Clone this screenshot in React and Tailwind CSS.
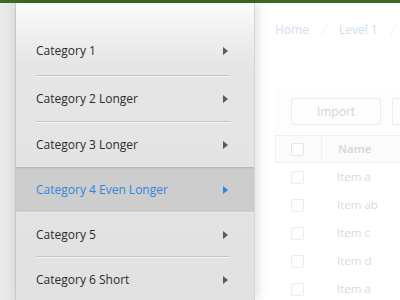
import { useState } from "react";

const categories = [
  "Category 1",
  "Category 2 Longer",
  "Category 3 Longer",
  "Category 4 Even Longer",
  "Category 5",
  "Category 6 Short",
];

const rows = ["Item a", "Item ab", "Item c", "Item d", "Item a"];

function Arrow({ active }) {
  return (
    <svg width="5" height="8" viewBox="0 0 5 8" className="shrink-0">
      <path d="M0 0 L5 4 L0 8 Z" fill={active ? "#2f86df" : "#5a5a5a"} />
    </svg>
  );
}

function Separator() {
  return (
    <div className="ml-5 mr-6 flex flex-col">
      <div className="h-px bg-[#c4c4c4]" />
      <div className="h-px bg-[#f6f6f6]" />
    </div>
  );
}

export default function App() {
  const [active, setActive] = useState(3);

  return (
    <div className="w-[400px] h-[300px] overflow-hidden flex flex-col bg-white font-['Open_Sans',sans-serif]">
      {/* top bar */}
      <div className="h-[3px] bg-[#3b6b20] shrink-0" />

      <div className="flex flex-1 min-h-0">
        {/* left strip */}
        <div className="w-4 shrink-0 bg-[linear-gradient(to_right,#ececec,#e2e2e2)] border-r border-[#cdcdcd]" />

        {/* menu panel */}
        <div className="w-[239px] shrink-0 relative z-10 pt-[24px] border-r border-[#d6d6d6] bg-[linear-gradient(to_bottom,#fbfbfb_0px,#e6e6e6_60px,#e1e1e1_100%)] shadow-[3px_0_10px_rgba(0,0,0,0.12)]">
          {categories.map((c, i) => {
            const isActive = i === active;
            const showSep =
              i < categories.length - 1 && i !== active && i + 1 !== active;
            return (
              <div key={c}>
                <button
                  onClick={() => setActive(i)}
                  className={`w-full flex items-center justify-between pl-5 pr-[26px] text-left text-[12px] ${
                    isActive
                      ? "h-[46px] bg-[#cdcdcd] border-t border-[#b9b9b9] border-b border-b-[#ececec] text-[#2f86df] shadow-[inset_0_1px_2px_rgba(0,0,0,0.06)]"
                      : i === 0
                      ? "h-[48px] text-[#2b2b2b]"
                      : i === 4
                      ? "h-[43px] text-[#2b2b2b]"
                      : "h-[44px] text-[#2b2b2b]"
                  }`}
                >
                  <span>{c}</span>
                  <Arrow active={isActive} />
                </button>
                {showSep && <Separator />}
              </div>
            );
          })}
        </div>

        {/* faded content */}
        <div className="flex-1 min-w-0 pl-5">
          {/* breadcrumb */}
          <div className="h-[47px] mt-[3px] flex items-center gap-3 text-[12px] text-[#d2def0]">
            <span>Home</span>
            <svg width="6" height="12" viewBox="0 0 6 12">
              <path d="M0 12 L6 0" stroke="#f0f3f8" strokeWidth="1" fill="none" />
            </svg>
            <span>Level 1</span>
            <svg width="6" height="12" viewBox="0 0 6 12">
              <path d="M0 12 L6 0" stroke="#f0f3f8" strokeWidth="1" fill="none" />
            </svg>
          </div>

          {/* toolbar */}
          <div className="mt-[35px] h-[47px] bg-[#fdfdfd] flex items-center gap-[11px] pl-4">
            <div className="w-[90px] h-[27px] shrink-0 border border-[#ececec] rounded-[2px] bg-[#fdfdfd] flex items-center justify-center text-[12px] text-[#d4d4d4]">
              Import
            </div>
            <div className="w-[40px] h-[27px] shrink-0 border border-[#ececec] rounded-[2px] bg-[#fdfdfd]" />
          </div>

          {/* table header */}
          <div className="h-[28px] flex items-center border-y border-l border-[#efefef] bg-[#fbfbfb]">
            <div className="w-[46px] h-full flex items-center pl-[15px] border-r border-[#efefef]">
              <div className="w-[13px] h-[13px] border border-[#e6e6e6] rounded-[2px] bg-white" />
            </div>
            <span className="pl-4 text-[11.5px] font-semibold text-[#d5d5d5]">Name</span>
          </div>

          {/* rows */}
          {rows.map((r, i) => (
            <div key={i} className="h-[28px] flex items-center">
              <div className="w-[46px] pl-[16px]">
                <div className="w-[13px] h-[13px] border border-[#ececec] rounded-[2px] bg-white" />
              </div>
              <span className="pl-4 text-[11.5px] text-[#dadada]">{r}</span>
            </div>
          ))}
        </div>
      </div>
    </div>
  );
}
